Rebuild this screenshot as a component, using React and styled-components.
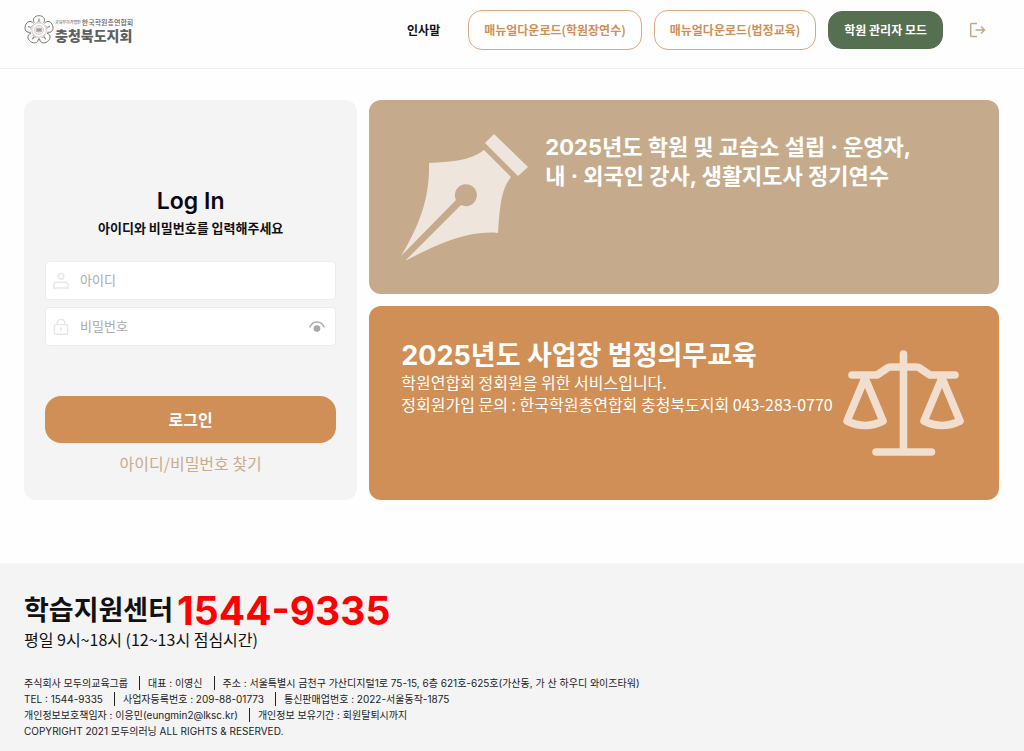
import React, { useState } from "react";
import styled, { createGlobalStyle } from "styled-components";

const GlobalStyle = createGlobalStyle`
  * {
    box-sizing: border-box;
  }

  body {
    margin: 0;
    background: #fefefe;
    color: #111;
    font-family: "Noto Sans CJK KR", sans-serif;
  }

  h1, h2, p {
    margin: 0;
  }

  a {
    color: inherit;
    text-decoration: none;
  }

  button, input {
    font-family: inherit;
  }
`;

const mixedFont = `"Inter", "Noto Sans CJK KR", sans-serif`;

const Page = styled.div`
  display: flex;
  flex-direction: column;
  min-height: 100vh;
`;

const Header = styled.header`
  display: flex;
  align-items: center;
  justify-content: space-between;
  padding: 10px 38px 18px 24px;
  border-bottom: 1px solid #f0f0f0;
`;

const Logo = styled.a`
  display: flex;
  align-items: center;
  gap: 1px;
  color: #606060;
`;

const LogoText = styled.span`
  display: flex;
  flex-direction: column;
`;

const LogoTop = styled.span`
  display: flex;
  align-items: center;
  justify-content: space-between;
  gap: 1px;
  font-size: 7px;
  font-weight: 500;
  line-height: 10px;
  white-space: nowrap;

  small {
    font-size: 4px;
  }
`;

const LogoName = styled.strong`
  font-size: 14px;
  font-weight: 900;
  line-height: 16px;
`;

const Nav = styled.nav`
  display: flex;
  align-items: center;
  gap: 12px;
  font-size: 12px;
  font-weight: 700;
`;

const NavLink = styled.a`
  margin-right: 16px;
  padding-bottom: 2px;
`;

const NavButton = styled.button`
  height: ${(props) => (props.$solid ? 38 : 40)}px;
  padding: 0 15px 2px;
  border: 1px solid ${(props) => (props.$solid ? "#566f51" : "#dba97c")};
  border-radius: 14px;
  background: ${(props) => (props.$solid ? "#566f51" : "#fff")};
  color: ${(props) => (props.$solid ? "#fff" : "#d08f56")};
  font-size: 12px;
  font-weight: 700;
  white-space: nowrap;
  cursor: pointer;
`;

const IconButton = styled.button`
  display: flex;
  padding: 0;
  border: 0;
  background: none;
  cursor: pointer;
`;

const LogoutButton = styled(IconButton)`
  margin-left: 13px;
`;

const Main = styled.main`
  display: grid;
  grid-template-columns: 9fr 17fr;
  gap: 12px;
  padding: 31px 25px 63px 24px;
`;

const LoginPanel = styled.form`
  display: flex;
  flex-direction: column;
  padding: 87px 21px 24px;
  border-radius: 12px;
  background: #f4f4f4;
`;

const LoginTitle = styled.h1`
  color: #0b0712;
  font-family: ${mixedFont};
  font-size: 23px;
  font-weight: 600;
  line-height: 28px;
  text-align: center;
`;

const LoginGuide = styled.p`
  margin: 3px 0 23px;
  font-size: 13px;
  font-weight: 700;
  line-height: 20px;
  text-align: center;
`;

const Field = styled.label`
  display: flex;
  align-items: center;
  gap: 11px;
  height: 39px;
  margin-bottom: 7px;
  padding: 0 10px 0 7px;
  border: 1px solid #ececec;
  border-radius: 4px;
  background: #fff;

  input {
    flex: 1;
    min-width: 0;
    padding: 0 0 2px;
    border: 0;
    outline: 0;
    background: none;
    font-size: 13px;
  }

  input::placeholder {
    color: #aaa;
  }
`;

const SubmitButton = styled.button`
  height: 47px;
  margin-top: 43px;
  padding: 0 0 1px;
  border: 0;
  border-radius: 16px;
  background: #d08f56;
  color: #fff;
  font-size: 16px;
  font-weight: 700;
  cursor: pointer;
`;

const FindLink = styled.a`
  margin-top: 8px;
  color: #c9ab8d;
  font-size: 16px;
  line-height: 24px;
  text-align: center;
`;

const Courses = styled.div`
  display: grid;
  grid-template-rows: 194px 194px;
  gap: 12px;
`;

const CourseCard = styled.a`
  display: flex;
  justify-content: ${(props) => (props.$spread ? "space-between" : "flex-start")};
  gap: ${(props) => (props.$spread ? 8 : 16)}px;
  padding: 32px;
  border-radius: 12px;
  background: ${(props) => props.$color};
  color: #fff;

  svg {
    flex: none;
    align-self: center;
  }
`;

const CourseTitle = styled.h2`
  padding-top: ${(props) => (props.$large ? 2 : 1)}px;
  font-family: ${mixedFont};
  font-size: ${(props) => (props.$large ? 27 : 22)}px;
  font-weight: 700;
  line-height: ${(props) => (props.$large ? 31 : 29)}px;
`;

const CourseText = styled.p`
  font-size: 16px;
  line-height: 22px;
  white-space: nowrap;
`;

const Footer = styled.footer`
  flex: 1;
  padding: 29px 24px 12px;
  background: #f4f4f4;
  font-family: ${mixedFont};
`;

const Support = styled.div`
  display: flex;
  align-items: center;
  gap: 4px;
  font-size: 27px;
  font-weight: 700;
  line-height: 38px;

  strong {
    color: #fe0000;
    font-size: 39px;
    font-weight: 700;
  }
`;

const Hours = styled.p`
  margin-bottom: 27px;
  font-family: "Noto Sans CJK KR", sans-serif;
  font-size: 16px;
  line-height: 18px;
`;

const InfoRow = styled.p`
  display: flex;
  align-items: center;
  color: #222;
  font-size: 10px;
  line-height: 16px;

  span + span {
    margin-left: 11px;
    padding-left: 8px;
    border-left: 1px solid #222;
    line-height: 14px;
  }
`;

const PETALS = [0, 72, 144, 216, 288];

function Emblem() {
  return (
    <svg width="30" height="30" viewBox="-15 -15 30 30" fill="none" stroke="#77706f">
      {PETALS.map((angle) => (
        <g key={angle} transform={`rotate(${angle})`}>
          <path d="M-4.6-7.2C-7-11-4.500-14.300 0-14.300S7-11 4.6-7.2" strokeWidth="0.9" />
          <path d="M0-11.5V-8.5" strokeWidth="1" />
          <path d="M-2.2-7.6Q0-9.4 2.2-7.6" stroke="#b3a5a5" strokeWidth="0.8" />
        </g>
      ))}
      <circle r="7.2" stroke="#d3c8c8" />
      <circle r="4.6" stroke="#d3c8c8" fill="#f0eaea" strokeWidth="0.8" />
      <path d="M-2-2V2M0-2.2V2.2M2-2V2M-2 0H2" strokeWidth="0.8" />
    </svg>
  );
}

function LogoutIcon() {
  return (
    <svg width="18" height="18" viewBox="0 0 18 18" fill="none" stroke="#c6a886" strokeWidth="1.5">
      <path d="M9 2.500H3.500Q2.700 2.500 2.700 3.300V14.700Q2.700 15.500 3.500 15.500H9M7.500 9H16.500M13 5.500L16.500 9L13 12.500" />
    </svg>
  );
}

function UserIcon() {
  return (
    <svg width="16" height="18" viewBox="0 0 16 18" fill="none" stroke="#e6e6e6" strokeWidth="1.4">
      <circle cx="8" cy="4.2" r="2.8" />
      <path d="M.8 16V13.4Q.8 10.2 4 10.2H12Q15.2 10.2 15.2 13.4V16Z" />
    </svg>
  );
}

function LockIcon() {
  return (
    <svg width="16" height="18" viewBox="0 0 16 18" fill="none" stroke="#e6e6e6" strokeWidth="1.4">
      <rect x="1.4" y="6.6" width="13.2" height="9.6" rx="1.6" />
      <path d="M4.2 6.6V5.2A3.8 3.8 0 0 1 11.8 5.2V6.6M8 9.6V13" />
    </svg>
  );
}

function EyeIcon() {
  return (
    <svg width="16" height="12" viewBox="0 0 16 12" fill="none" stroke="#a9a9a9" strokeWidth="1.3">
      <path d="M.6 6.6C2 3 4.8 1 8 1S14 3 15.4 6.6" />
      <circle cx="8" cy="7.6" r="3.3" fill="#a9a9a9" stroke="none" />
    </svg>
  );
}

function PenIcon() {
  return (
    <svg width="128" height="130" viewBox="0 0 128 130" fill="#eee5dc">
      <path d="M93 2L127 35L117 44L84 11Z" />
      <path d="M83 18L110 45C100 58 99 74 97 101C68 98 36 112 4 129L60 73A11 11 0 1 0 55 68L0 124C18 94 29 66 28 31C49 30 69 29 83 18Z" />
    </svg>
  );
}

function ScalesIcon() {
  return (
    <svg
      width="124"
      height="108"
      viewBox="0 0 124 108"
      fill="none"
      stroke="#f1dece"
      strokeWidth="7.6"
      strokeLinecap="round"
      strokeLinejoin="round"
    >
      <path d="M60.5 5V103M33 103H88.5M9 26H34L43 20Q45 18 48 18H73Q76 18 78 20L87 26H112" />
      <path d="M22 29L4 72Q22 81 40 72ZM99 29L81 72Q99 81 117 72Z" />
    </svg>
  );
}

const footerRows = [
  ["주식회사 모두의교육그룹", "대표 : 이영신", "주소 : 서울특별시 금천구 가산디지털1로 75-15, 6층 621호-625호(가산동, 가 산 하우디 와이즈타워)"],
  ["TEL : 1544-9335", "사업자등록번호 : 209-88-01773", "통신판매업번호 : 2022-서울동작-1875"],
  ["개인정보보호책임자 : 이응민(eungmin2@lksc.kr)", "개인정보 보유기간 : 회원탈퇴시까지"],
  ["COPYRIGHT 2021 모두의러닝 ALL RIGHTS & RESERVED."],
];

export default function App() {
  const [showPassword, setShowPassword] = useState(false);

  return (
    <Page>
      <GlobalStyle />
      <Header>
        <Logo href="#">
          <Emblem />
          <LogoText>
            <LogoTop>
              <small>교육부허가법인</small>
              <span>한국학원총연합회</span>
            </LogoTop>
            <LogoName>충청북도지회</LogoName>
          </LogoText>
        </Logo>
        <Nav>
          <NavLink href="#">인사말</NavLink>
          <NavButton>매뉴얼다운로드(학원장연수)</NavButton>
          <NavButton>매뉴얼다운로드(법정교육)</NavButton>
          <NavButton $solid>학원 관리자 모드</NavButton>
          <LogoutButton aria-label="로그아웃">
            <LogoutIcon />
          </LogoutButton>
        </Nav>
      </Header>

      <Main>
        <LoginPanel onSubmit={(e) => e.preventDefault()}>
          <LoginTitle>Log In</LoginTitle>
          <LoginGuide>아이디와 비밀번호를 입력해주세요</LoginGuide>
          <Field>
            <UserIcon />
            <input type="text" placeholder="아이디" aria-label="아이디" />
          </Field>
          <Field>
            <LockIcon />
            <input
              type={showPassword ? "text" : "password"}
              placeholder="비밀번호"
              aria-label="비밀번호"
            />
            <IconButton
              type="button"
              aria-label="비밀번호 보기"
              onClick={() => setShowPassword(!showPassword)}
            >
              <EyeIcon />
            </IconButton>
          </Field>
          <SubmitButton type="submit">로그인</SubmitButton>
          <FindLink href="#">아이디/비밀번호 찾기</FindLink>
        </LoginPanel>

        <Courses>
          <CourseCard href="#" $color="#c5ab8c">
            <PenIcon />
            <CourseTitle>
              2025년도 학원 및 교습소 설립 · 운영자,
              <br />내 · 외국인 강사, 생활지도사 정기연수
            </CourseTitle>
          </CourseCard>
          <CourseCard href="#" $color="#d08f56" $spread>
            <div>
              <CourseTitle $large>2025년도 사업장 법정의무교육</CourseTitle>
              <CourseText>학원연합회 정회원을 위한 서비스입니다.</CourseText>
              <CourseText>정회원가입 문의 : 한국학원총연합회 충청북도지회 043-283-0770</CourseText>
            </div>
            <ScalesIcon />
          </CourseCard>
        </Courses>
      </Main>

      <Footer>
        <Support>
          <span>학습지원센터</span>
          <strong>1544-9335</strong>
        </Support>
        <Hours>평일 9시~18시 (12~13시 점심시간)</Hours>
        {footerRows.map((row) => (
          <InfoRow key={row[0]}>
            {row.map((item) => (
              <span key={item}>{item}</span>
            ))}
          </InfoRow>
        ))}
      </Footer>
    </Page>
  );
}
